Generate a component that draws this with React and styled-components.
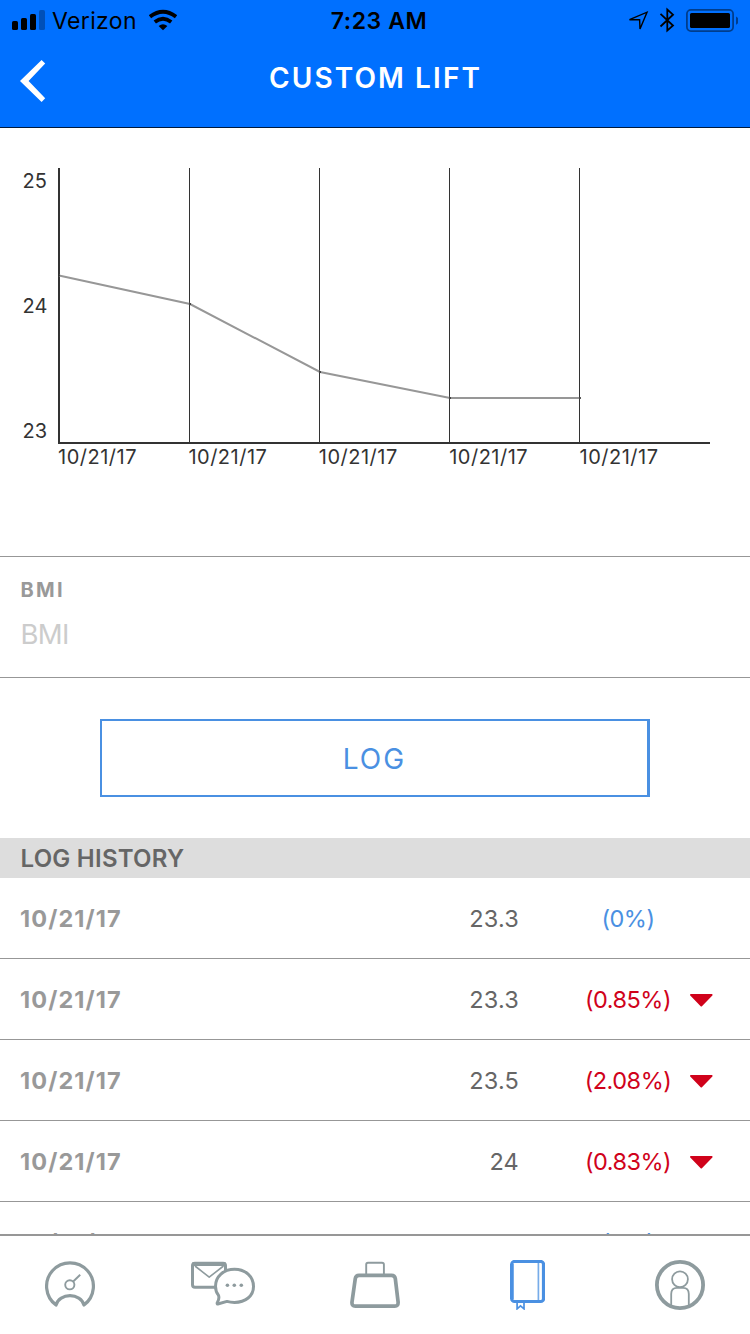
import styled, { createGlobalStyle } from "styled-components";

const dates = ["10/21/17", "10/21/17", "10/21/17", "10/21/17", "10/21/17"];

const history = [
    { date: "10/21/17", value: "23.3", change: "(0%)", down: false },
    { date: "10/21/17", value: "23.3", change: "(0.85%)", down: true },
    { date: "10/21/17", value: "23.5", change: "(2.08%)", down: true },
    { date: "10/21/17", value: "24", change: "(0.83%)", down: true },
    { date: "10/21/17", value: "24.2", change: "(0%)", down: false },
];

// points of the line, in pixels of the plot area
const points = [[1, 107.5], [132, 136], [262, 204], [392, 230], [522, 230]];

function StatusIcons() {
    return (
        <svg width="110" height="40" viewBox="628 0 110 40">
            <path d="M629.5 19.7L647 12.2L640 29L639.6 19.8Z" fill="none" stroke="#000" strokeWidth="1.4" strokeLinejoin="miter" />
            <path d="M660.5 13.8L673 25.5L667.3 30.6V9.6L673 14.7L660.5 26.5" fill="none" stroke="#000" strokeWidth="1.8" />
            <rect x="686.9" y="9.9" width="46.2" height="21.2" rx="4" fill="none" stroke="#000" strokeOpacity="0.45" strokeWidth="1.8" />
            <rect x="690" y="13" width="40" height="15" rx="1.6" fill="#000" />
            <path d="M736 16.5Q739 18 739 20.5Q739 23 736 24.8Z" fill="#000" fillOpacity="0.45" />
        </svg>
    );
}

function SignalIcon() {
    return (
        <svg width="33" height="40" viewBox="12 0 33 40">
            <rect x="12" y="21" width="6" height="9" rx="1.6" />
            <rect x="21" y="18" width="6" height="12" rx="1.6" />
            <rect x="30" y="14" width="6" height="16" rx="1.6" />
            <rect x="39" y="10" width="6" height="20" rx="1.6" fillOpacity="0.28" />
        </svg>
    );
}

function WifiIcon() {
    return (
        <svg width="28" height="40" viewBox="149 0 28 40">
            <g fill="none" stroke="#000" strokeWidth="3.8">
                <path d="M150 16.7Q163 6.8 176 16.7" />
                <path d="M154.8 22Q163 15.6 171.2 22" />
            </g>
            <path d="M158.6 26Q163 22.4 167.4 26L163 30.2Z" />
        </svg>
    );
}

function GaugeIcon() {
    return (
        <svg width="50" height="50" viewBox="45 1260 50 50">
            <g fill="none" stroke="#8e9b9e" strokeWidth="3.2">
                <path d="M56 1305A23.4 23.4 0 1 1 84 1305C81 1292.6 59 1292.6 56 1305Z" strokeLinejoin="round" />
                <circle cx="69.8" cy="1284.8" r="4.6" strokeWidth="1.9" />
                <path d="M73.2 1281.5L80.2 1274.8" strokeWidth="1.9" />
            </g>
        </svg>
    );
}

function MessagesIcon() {
    return (
        <svg width="65" height="50" viewBox="190 1260 65 50">
            <g fill="none" stroke="#8e9b9e" strokeLinejoin="round">
                <rect x="192.5" y="1263.3" width="33" height="24" rx="2.5" strokeWidth="3" />
                <path d="M192.5 1264H225.5" strokeWidth="4" />
                <path d="M195 1266L209.2 1277.2L223.5 1266" strokeWidth="1.6" />
                <path d="M234.5 1269.2C245.5 1269.2 253.5 1276.5 253.5 1286.5C253.5 1296 245.5 1302.4 234.5 1302.4C231.5 1302.4 229 1302 227 1301.4L217.8 1304C217 1304.2 217 1303.2 217.4 1302.4C219 1299.6 219.4 1297.5 218.4 1295.2C216.4 1292.6 215.5 1289.5 215.5 1286.2C215.5 1276.5 223.5 1269.2 234.5 1269.2Z" fill="#fff" strokeWidth="3" />
            </g>
            <g fill="#8e9b9e">
                <circle cx="227.4" cy="1285.2" r="1.8" />
                <circle cx="234.3" cy="1285.2" r="1.8" />
                <circle cx="241.3" cy="1285.2" r="1.8" />
            </g>
        </svg>
    );
}

function WeightIcon() {
    return (
        <svg width="50" height="50" viewBox="350 1260 50 50">
            <g fill="none" stroke="#8e9b9e">
                <path d="M366.2 1274V1264.5Q366.2 1262.8 368 1262.8H382Q383.9 1262.8 383.9 1264.5V1274" strokeWidth="1.9" />
                <path d="M359 1275.3H391.5Q394.8 1275.3 395.3 1278.5L398.1 1302Q398.4 1306.2 394.8 1306.2H355.3Q351.6 1306.2 352 1302L355.3 1278.5Q355.8 1275.3 359 1275.3Z" strokeWidth="3.7" />
            </g>
        </svg>
    );
}

function BookIcon() {
    return (
        <svg width="35" height="50" viewBox="510 1260 35 50">
            <g fill="none" stroke="#4a90e2">
                <path d="M538.4 1262V1302" strokeWidth="1.7" strokeOpacity="0.75" />
                <rect x="511.7" y="1261.5" width="31.8" height="40" rx="2.8" strokeWidth="3.2" />
                <path d="M511.8 1264V1299" strokeWidth="3.7" />
                <path d="M517.1 1303V1308.8L520.5 1305.8L524 1308.8V1303" strokeWidth="1.7" />
            </g>
        </svg>
    );
}

function ProfileIcon() {
    return (
        <svg width="50" height="50" viewBox="655 1260 50 50">
            <g fill="none" stroke="#8e9b9e" strokeWidth="1.8">
                <circle cx="680" cy="1285" r="23.1" strokeWidth="3.8" />
                <circle cx="680" cy="1279.3" r="7.9" />
                <path d="M671.2 1306V1294Q671.2 1287.8 677 1287.8H683Q688.8 1287.8 688.8 1294V1306" />
            </g>
        </svg>
    );
}

export default function App() {
    return (
        <Screen>
            <GlobalStyle />
            <Header>
                <StatusBar>
                    <Carrier>
                        <SignalIcon />
                        <CarrierName>Verizon</CarrierName>
                        <WifiIcon />
                    </Carrier>
                    <Clock>7:23 AM</Clock>
                    <StatusRight><StatusIcons /></StatusRight>
                </StatusBar>
                <TitleBar>
                    <svg width="28" height="44" viewBox="19 59 28 44">
                        <path d="M41.6 60L45.2 63.6L28.6 81L45.2 98.2L41.6 102L20 81Z" fill="#fff" />
                    </svg>
                    <Title>CUSTOM LIFT</Title>
                    <span />
                </TitleBar>
            </Header>
            <Main>
                <Chart>
                    <YLabels>
                        <span>25</span>
                        <span>24</span>
                        <span>23</span>
                    </YLabels>
                    <Plot>
                        <svg width="652" height="276" viewBox="0 0 652 276">
                            <g fill="#333" shapeRendering="crispEdges">
                                <rect x="131" width="1" height="275" />
                                <rect x="261" width="1" height="275" />
                                <rect x="391" width="1" height="275" />
                                <rect x="521" width="1" height="275" />
                                <rect width="2" height="276" />
                                <rect y="274" width="652" height="2" />
                            </g>
                            <polyline points={points.join(" ")} fill="none" stroke="#979797" strokeWidth="2" />
                            {points.map(([x, y]) => <circle key={x} cx={x} cy={y} r="1.1" fill="#333" />)}
                        </svg>
                        <XLabels>
                            {dates.map((date, i) => <span key={i}>{date}</span>)}
                        </XLabels>
                    </Plot>
                </Chart>
                <Field>
                    <FieldLabel>BMI</FieldLabel>
                    <Placeholder>BMI</Placeholder>
                </Field>
                <LogButton>LOG</LogButton>
                <HistoryTitle>LOG HISTORY</HistoryTitle>
                {history.map((item, i) => (
                    <Row key={i}>
                        <LogDate>{item.date}</LogDate>
                        <Value>{item.value}</Value>
                        <Change $down={item.down}>{item.change}</Change>
                        {item.down && (
                            <svg width="24" height="14" viewBox="0 0 24 14">
                                <path d="M1.9 1.9H22.7L12.3 12.6Z" fill="#d0021b" stroke="#d0021b" strokeWidth="1.8" strokeLinejoin="round" />
                            </svg>
                        )}
                    </Row>
                ))}
            </Main>
            <TabBar>
                <Tab><GaugeIcon /></Tab>
                <Tab><MessagesIcon /></Tab>
                <Tab><WeightIcon /></Tab>
                <Tab><BookIcon /></Tab>
                <Tab><ProfileIcon /></Tab>
            </TabBar>
        </Screen>
    );
}

const GlobalStyle = createGlobalStyle`
* {
    box-sizing: border-box;
}
body {
    margin: 0;
    background: #ffffff;
}
svg {
    display: block;
    flex-shrink: 0;
}
`;
const Screen = styled.div`
width: 750px;
height: 1334px;
display: flex;
flex-direction: column;
overflow: hidden;
background: #ffffff;
font-family: 'Inter', 'Liberation Sans', sans-serif;
`;
const Header = styled.div`
height: 128px;
flex-shrink: 0;
background: #0070ff;
border-bottom: 1px solid #001a3d;
`;
const StatusBar = styled.div`
height: 40px;
padding: 0 11px 0 12px;
display: grid;
grid-template-columns: 1fr auto 1fr;
color: #000000;
`;
const Carrier = styled.div`
display: flex;
`;
const CarrierName = styled.span`
width: 97px;
margin-left: 7px;
font-size: 23px;
line-height: 43px;
letter-spacing: 0.35px;
`;
const Clock = styled.div`
padding-left: 7px;
font-weight: 600;
font-size: 23px;
line-height: 43px;
letter-spacing: 0.6px;
`;
const StatusRight = styled.div`
display: flex;
justify-content: flex-end;
padding-right: 1px;
`;
const TitleBar = styled.div`
height: 87px;
padding: 19px 19px 0;
display: grid;
grid-template-columns: 1fr auto 1fr;
align-items: start;
`;
const Title = styled.h1`
margin: 0;
padding-left: 1px;
font-weight: 600;
font-size: 28px;
line-height: 38px;
letter-spacing: 2.1px;
color: #ffffff;
`;
const Main = styled.div`
flex: 1;
min-height: 0;
overflow: hidden;
`;
const Chart = styled.div`
height: 428px;
padding: 40px 40px 0 22.5px;
display: flex;
font-size: 20px;
line-height: 26px;
color: #333333;
`;
const YLabels = styled.div`
width: 35.5px;
height: 276px;
display: flex;
flex-direction: column;
justify-content: space-between;
`;
const Plot = styled.div`
width: 652px;
`;
const XLabels = styled.div`
display: grid;
grid-template-columns: repeat(5, 130.4px);
letter-spacing: 0.5px;
`;
const Field = styled.div`
height: 122px;
padding: 20px 20px 0 20.5px;
border-top: 1px solid #979797;
border-bottom: 1px solid #979797;
`;
const FieldLabel = styled.div`
font-weight: 700;
font-size: 20px;
line-height: 27px;
letter-spacing: 2.3px;
color: #999999;
`;
const Placeholder = styled.div`
margin-top: 12px;
font-size: 27.5px;
line-height: 36px;
letter-spacing: -0.7px;
color: #cccccc;
`;
const LogButton = styled.button`
display: block;
width: 550px;
height: 78px;
margin: 41px auto;
padding: 2px 0 0;
background: #ffffff;
border: 2px solid #4a90e2;
border-right-width: 3px;
font-family: inherit;
font-size: 28px;
letter-spacing: 2px;
color: #4a90e2;
`;
const HistoryTitle = styled.div`
height: 40px;
padding: 0 20.5px;
background: #dddddd;
font-weight: 600;
font-size: 24px;
line-height: 41px;
letter-spacing: 0.25px;
color: #666666;
`;
const Row = styled.div`
height: 81px;
padding: 2px 20px 0;
display: flex;
align-items: center;
border-bottom: 1px solid #979797;
font-size: 23.5px;
line-height: 32px;
`;
const LogDate = styled.div`
width: 200px;
font-weight: 700;
letter-spacing: 1.1px;
color: #999999;
`;
const Value = styled.div`
width: 299px;
text-align: right;
letter-spacing: 0.2px;
color: #666666;
`;
const Change = styled.div`
width: 110px;
margin: 0 6px 0 54px;
text-align: center;
letter-spacing: -0.5px;
color: ${({ $down }) => ($down ? "#d0021b" : "#4a90e2")};
`;
const TabBar = styled.div`
height: 100px;
flex-shrink: 0;
padding: 24px 45px 0;
display: flex;
align-items: flex-start;
justify-content: space-between;
border-top: 2px solid #979797;
background: #ffffff;
`;
const Tab = styled.div`
width: 50px;
display: flex;
justify-content: center;
`;
